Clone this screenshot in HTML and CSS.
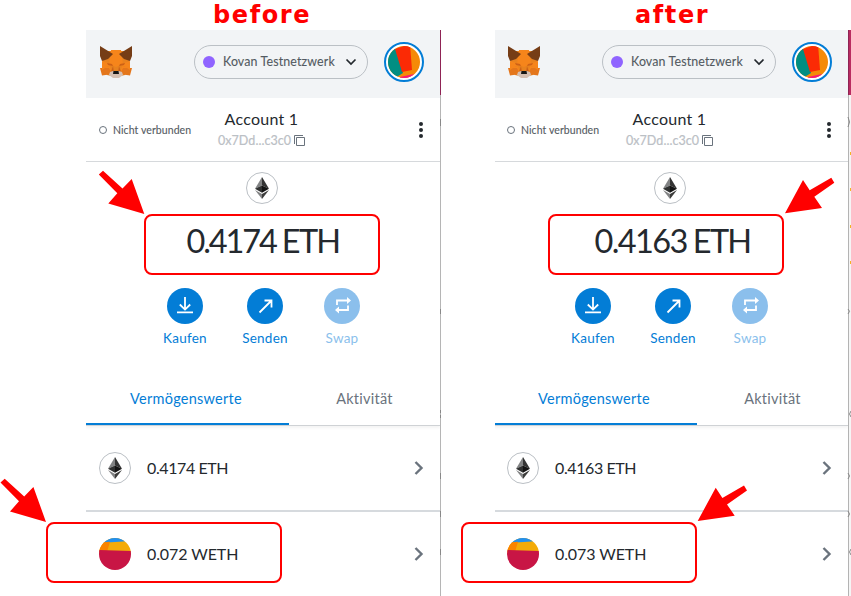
FILE: index.html
```
<!DOCTYPE html>
<html lang="de">
<head>
<meta charset="utf-8">
<title>Wallet: before / after</title>
<link rel="stylesheet" href="styles.css">
</head>
<body>
<svg class="defs" aria-hidden="true">
  <symbol id="fox" viewBox="0 0 34 32">
    <path fill="#e8821e" d="M4 5h26l1 17-5 7-9 2-9-2-5-7z"/>
    <path fill="#f6851b" d="M12 4h10l2 14-7 3-7-3zM3 22l8-2 2 7-9 2zM31 22l-8-2-2 7 9 2z"/>
    <path fill="#e4761b" d="M1 22h9l3 6-10 1.500zM33 22h-9l-3 6 10 1.500z"/>
    <path fill="#f6851b" d="M3 15l9 3-9 6zM31 15l-9 3 9 6z"/>
    <path fill="#763d16" d="M1 0l13 8-5 5-6 2-2-5zM33 0L20 8l5 5 6 2 2-5z"/>
    <path fill="#cd6116" d="M8 17l5 1 1 2-5-1zM26 17l-5 1-1 2 5-1zM14 20l-2 6 3 1zM20 20l2 6-3 1z"/>
    <path fill="#d5bfb2" d="M11 26l3-1h6l3 1 1 3-4 3h-6l-4-3z"/>
    <path fill="#161616" d="M14.500 25h5l.5 3h-6z"/>
  </symbol>
  <symbol id="eth" viewBox="0 0 14 22">
    <path fill="#828384" d="M7 0v8.5L0 11.7z"/>
    <path fill="#343434" d="M7 0l7 11.7-7-3.2z"/>
    <path fill="#2f3030" d="M0 11.7l7-3.3v7.4z"/>
    <path fill="#131313" d="M14 11.7L7 8.4v7.4z"/>
    <path fill="#828384" d="M0 13.1L7 17v5z"/>
    <path fill="#3c3c3b" d="M14 13.1L7 17v5z"/>
  </symbol>
  <symbol id="face" viewBox="0 0 32 32">
    <path fill="#f58a07" d="M0 0h32v32H0z"/>
    <path fill="#018e82" d="M0 2l8 1 7 24-8 5H0z"/>
    <path fill="#fb2a05" d="M7 3L22-2l2 26-10 2z"/>
    <path fill="#f8187a" d="M12 31l14-3-3 6H12z"/>
  </symbol>
  <symbol id="token" viewBox="0 0 32 32">
    <path fill="#f3ab08" d="M0 0h32v16H0z"/>
    <path fill="#2190ee" d="M0 0h32v3L0 5z"/>
    <path fill="#fa8400" d="M0 4.5l11-.8L8 14H0z"/>
    <path fill="#c81545" d="M0 12l32 1v19H0z"/>
  </symbol>
  <symbol id="copy" viewBox="0 0 11 11">
    <path fill="none" stroke="#6a737d" d="M.5 9V.5H9M2.5 2.5h8v8h-8z"/>
  </symbol>
  <symbol id="down" viewBox="0 0 12 8"><path fill="none" stroke="#24292e" stroke-width="1.700" d="M1.500 1.500L6 6l4.500-4.500"/></symbol>
  <symbol id="next" viewBox="0 0 10 14"><path fill="none" stroke="#6a737d" stroke-width="2.400" d="M1.500 1L7.500 7l-6 6"/></symbol>
  <symbol id="buy" viewBox="0 0 18 18"><path fill="none" stroke="#fff" stroke-width="1.800" d="M1 15.300h16M9 0v12.500M3.800 7.500L9 12.600l5.200-5.100"/></symbol>
  <symbol id="send" viewBox="0 0 18 18"><path fill="none" stroke="#fff" stroke-width="1.800" d="M3.500 15.500L15 4M8.500 3.500h7v7"/></symbol>
  <symbol id="swap" viewBox="0 0 18 18"><path fill="none" stroke="#fff" stroke-width="1.800" d="M4 8v-4.500h10M15 8.500v4.500H5"/><path fill="#fff" d="M14 0l4 3.500L14 7zM6 9.500L2 13l4 3.500z"/></symbol>
</svg>

<main class="compare">
  <section class="shot shot-before">
    <h1 class="caption">before</h1>
    <div class="wallet">
      <div class="inner">
        <header class="topbar">
          <svg class="fox"><use href="#fox"/></svg>
          <div class="network"><i class="dot"></i><span>Kovan Testnetzwerk</span><svg class="down"><use href="#down"/></svg></div>
          <div class="avatar"><svg><use href="#face"/></svg></div>
        </header>
        <div class="account">
          <div class="status"><i></i>Nicht verbunden</div>
          <div class="identity"><div class="name">Account 1</div><div class="address"><span>0x7Dd...c3c0</span><svg><use href="#copy"/></svg></div></div>
          <div class="menu"><i></i><i></i><i></i></div>
        </div>
        <div class="hero">
          <div class="coin"><svg><use href="#eth"/></svg></div>
          <div class="balance"><span class="amount">0.4174</span><span class="unit">ETH</span></div>
          <div class="actions">
            <div class="action"><b><svg><use href="#buy"/></svg></b>Kaufen</div>
            <div class="action"><b><svg><use href="#send"/></svg></b>Senden</div>
            <div class="action off"><b><svg><use href="#swap"/></svg></b>Swap</div>
          </div>
        </div>
        <nav class="tabs"><div class="tab active">Vermögenswerte</div><div class="tab">Aktivität</div></nav>
        <div class="asset"><div class="coin"><svg><use href="#eth"/></svg></div><span>0.4174 ETH</span><svg class="next"><use href="#next"/></svg></div>
        <div class="asset"><svg class="token"><use href="#token"/></svg><span class="weth">0.072 WETH</span><svg class="next"><use href="#next"/></svg></div>
      </div>
    </div>
    <div class="edge"></div>
  </section>
  <section class="shot shot-after">
    <h1 class="caption">after</h1>
    <div class="wallet">
      <div class="inner">
        <header class="topbar">
          <svg class="fox"><use href="#fox"/></svg>
          <div class="network"><i class="dot"></i><span>Kovan Testnetzwerk</span><svg class="down"><use href="#down"/></svg></div>
          <div class="avatar"><svg><use href="#face"/></svg></div>
        </header>
        <div class="account">
          <div class="status"><i></i>Nicht verbunden</div>
          <div class="identity"><div class="name">Account 1</div><div class="address"><span>0x7Dd...c3c0</span><svg><use href="#copy"/></svg></div></div>
          <div class="menu"><i></i><i></i><i></i></div>
        </div>
        <div class="hero">
          <div class="coin"><svg><use href="#eth"/></svg></div>
          <div class="balance"><span class="amount">0.4163</span><span class="unit">ETH</span></div>
          <div class="actions">
            <div class="action"><b><svg><use href="#buy"/></svg></b>Kaufen</div>
            <div class="action"><b><svg><use href="#send"/></svg></b>Senden</div>
            <div class="action off"><b><svg><use href="#swap"/></svg></b>Swap</div>
          </div>
        </div>
        <nav class="tabs"><div class="tab active">Vermögenswerte</div><div class="tab">Aktivität</div></nav>
        <div class="asset"><div class="coin"><svg><use href="#eth"/></svg></div><span>0.4163 ETH</span><svg class="next"><use href="#next"/></svg></div>
        <div class="asset"><svg class="token"><use href="#token"/></svg><span class="weth">0.073 WETH</span><svg class="next"><use href="#next"/></svg></div>
      </div>
    </div>
    <div class="edge"></div>
  </section>
</main>

<svg class="marks" viewBox="0 0 851 596">
  <!-- fragments of the page behind each popup -->
  <path fill="#888" d="M440 119h1v7h-1zM440 309h1v5h-1zM440 410h1v3h-1zM440 415h1v3h-1zM440 473h1v6h-1zM440 511h1v6h-1zM440 549h1v6h-1z"/>
  <g fill="none" stroke="#888"><path d="M848 117q3 5 0 10M848 309q3 2 0 5M851 411q-3 3 0 6M848 473q3 3 0 6M848 511q3 3 0 6M851 549q-3 3 0 6"/></g>
  <path fill="#f5b324" d="M850 152h1v3h-1zM850 188h1v3h-1zM850 225h1v3h-1zM850 261h1v3h-1z"/>
  <g fill="none" stroke="#f00" stroke-width="2">
    <rect x="145" y="215" width="234" height="59" rx="7"/>
    <rect x="47" y="523" width="234" height="59" rx="7"/>
    <rect x="549" y="215" width="234" height="59" rx="7"/>
    <rect x="462" y="523" width="234" height="59" rx="7"/>
  </g>
  <g fill="#f00">
    <path id="ar" d="M144.300 214L131.700 179l-9.200 9.600L103 170.700l-4.200 3.800 18.500 18.800-9 10.200z"/>
    <use href="#ar" x="-98.300" y="308"/>
    <path id="al" d="M785 213.300L803 180l6.700 10.300L831.300 177.800l3 5L814.300 196.700 822 208z"/>
    <use href="#al" x="-87.300" y="307.700"/>
  </g>
</svg>
</body>
</html>
```
FILE: styles.css
```
* { box-sizing: border-box; }
body {
  margin: 0;
  width: 851px;
  height: 596px;
  overflow: hidden;
  position: relative;
  background: #fff;
  color: #24292e;
  font-family: Lato, "Liberation Sans", sans-serif;
}
svg { display: block; flex: none; }
i, b { display: block; font-weight: normal; }
.defs { width: 0; height: 0; position: absolute; }
.marks { position: absolute; inset: 0; width: 851px; height: 596px; }

.compare { display: flex; height: 596px; }
.shot { display: grid; grid-template: 30px 566px / 354px auto; }
.shot-before { margin-left: 86px; margin-right: 54px; }
.shot-after { grid-template-columns: 353px 3px; }
.caption {
  grid-column: 1 / -1;
  margin: 0 0 0 127px;
  color: #f00;
  font: bold 24px/31px "DejaVu Sans", sans-serif;
  letter-spacing: 1.6px;
}
.shot-after .caption { margin-left: 140px; }
.wallet { overflow: hidden; }
.inner { width: 354px; }
.shot-after .inner { margin-left: -1px; }
.edge { width: 1px; background: linear-gradient(#8f2355 65px, #b5b5b5 65px); }
.shot-after .edge {
  width: 3px;
  border-left: 1px solid #b3b3b3;
  background: linear-gradient(#b92c60 65px, #f5f5f5 65px);
  border-image: linear-gradient(#8f2355 65px, #b3b3b3 65px) 0 0 0 1;
}

.topbar {
  height: 68px;
  padding: 0 16px 4px 13px;
  display: flex;
  align-items: center;
  background: #f2f4f6;
}
.fox { width: 34px; height: 32px; }
.network {
  display: flex;
  align-items: center;
  width: 174px;
  height: 34px;
  margin-left: 61px;
  padding: 0 10px 0 8px;
  border: 1px solid #bbc0c5;
  border-radius: 17px;
  color: #535a61;
  font-size: 12.4px;
  letter-spacing: .14px;
  white-space: nowrap;
  -webkit-text-stroke: .1px;
}
.network span { margin-top: -1px; }
.dot { width: 12px; height: 12px; margin-right: 8px; border-radius: 50%; background: #9064ff; }
.down { width: 12px; height: 8px; margin-left: auto; }
.avatar {
  width: 40px;
  height: 40px;
  margin-left: 16px;
  padding: 2px;
  border: 2px solid #037dd6;
  border-radius: 50%;
  background: #fff;
}
.avatar svg { width: 32px; height: 32px; border-radius: 50%; }

.account {
  display: grid;
  grid-template-columns: 106px 139px 1fr;
  align-items: center;
  height: 64px;
  border-bottom: 1px solid #d6d9dc;
}
.status {
  display: flex;
  align-items: center;
  padding-left: 13px;
  color: #535a61;
  font-size: 10.5px;
  letter-spacing: .08px;
  white-space: nowrap;
  -webkit-text-stroke: .1px;
}
.status i { width: 8px; height: 8px; margin-right: 6px; border: 1px solid #6a737d; border-radius: 50%; }
.identity { text-align: center; padding-top: 1px; }
.name { font-size: 16px; line-height: 21px; letter-spacing: .25px; }
.address {
  display: flex;
  justify-content: center;
  align-items: center;
  height: 24px;
  gap: 3px;
  color: #bbc0c5;
  font-size: 12.5px;
  letter-spacing: .05px;
  -webkit-text-stroke: .2px;
}
.address svg { width: 11px; height: 11px; }
.menu { display: grid; gap: 2px; margin-left: 88px; }
.menu i { width: 4px; height: 4px; border-radius: 50%; background: #24292e; }

.hero { height: 209px; width: 352px; padding-top: 10px; display: flex; flex-direction: column; align-items: center; }
.coin {
  display: grid;
  place-items: center;
  width: 32px;
  height: 32px;
  border: 1px solid #bbc0c5;
  border-radius: 50%;
  background: #fff;
}
.coin svg { width: 14px; height: 22px; }
.balance {
  display: flex;
  gap: 6px;
  height: 76px;
  line-height: 74px;
  padding-left: 2px;
  font-size: 32.500px;
}
.amount { letter-spacing: -2.1px; }
.unit { letter-spacing: -1.700px; }
.shot-after .balance { padding-left: 5px; }
.shot-after .amount { letter-spacing: -1.600px; }
.actions { display: grid; grid-template-columns: 80px 80px 74px; margin-top: 8px; }
.action {
  display: flex;
  flex-direction: column;
  align-items: center;
  gap: 5px;
  color: #037dd6;
  font-size: 13.5px;
  line-height: 19px;
  letter-spacing: .25px;
}
.action b { display: grid; place-items: center; width: 36px; height: 36px; border-radius: 50%; background: #037dd6; }
.action svg { width: 18px; height: 18px; }
.off { color: #8bbfec; }
.off b { background: #8bbfec; }

.tabs {
  display: flex;
  height: 55px;
  border-bottom: 1px solid #cfd2d5;
  box-shadow: 0 2px 3px rgba(0, 0, 0, .05);
}
.tab {
  width: 151px;
  line-height: 55px;
  color: #6a737d;
  text-align: center;
  font-size: 14.5px;
  letter-spacing: .25px;
}
.active { width: 203px; height: 54px; border-bottom: 2px solid #037dd6; color: #037dd6; padding-right: 3px; }

.asset {
  display: flex;
  align-items: center;
  height: 86px;
  padding: 0 16px 0 13px;
  border-bottom: 2px solid #d6dade;
  font-size: 16px;
  letter-spacing: -.4px;
}
.asset span { margin: -2px 0 0 16px; }
.asset .weth { letter-spacing: -.1px; }
.token { width: 32px; height: 32px; border-radius: 50%; }
.next { width: 10px; height: 14px; margin-left: auto; }
```
